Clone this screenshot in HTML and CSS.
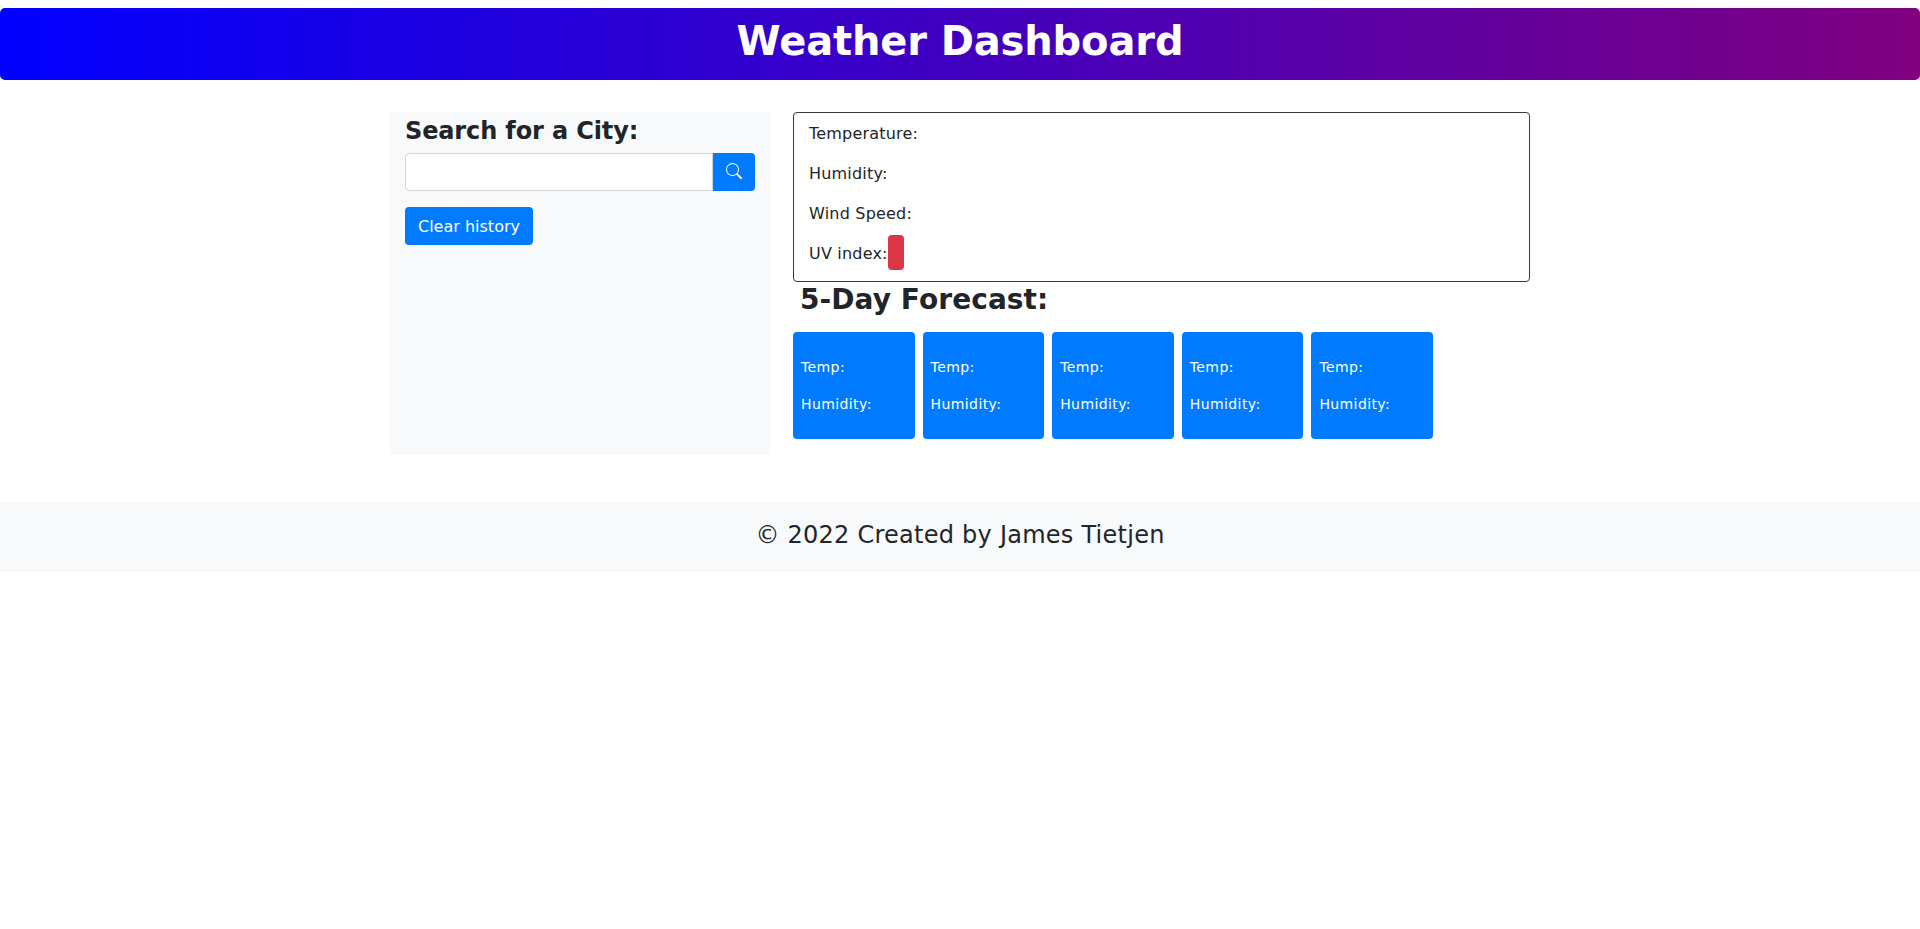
FILE: index.html
```html
<!DOCTYPE html>
<html lang="en">
<head>
  <meta charset="UTF-8" />
  <title>Weather Dashboard</title>
  <link rel="stylesheet" href="styles.css">
</head>
<body>
  <header class="banner">
    <h1>Weather Dashboard</h1>
  </header>
  <main class="container">
    <aside class="sidebar">
      <h2>Search for a City:</h2>
      <div class="search-group">
        <input type="text" class="search-input" />
        <button class="search-btn" aria-label="Search">
          <svg width="16" height="16" viewBox="0 0 16 16" fill="currentColor">
            <path d="M11.742 10.344a6.5 6.5 0 1 0-1.397 1.398h-.001c.03.04.062.078.098.115l3.85 3.85a1 1 0 0 0 1.415-1.414l-3.85-3.85a1.007 1.007 0 0 0-.115-.1zM12 6.5a5.5 5.5 0 1 1-11 0 5.5 5.5 0 0 1 11 0z"/>
          </svg>
        </button>
      </div>
      <button class="clear-btn">Clear history</button>
    </aside>
    <section class="results">
      <div class="current">
        <p>Temperature:</p>
        <p>Humidity:</p>
        <p>Wind Speed:</p>
        <p>UV index:<span class="uv"></span></p>
      </div>
      <h2 class="forecast-title">5-Day Forecast:</h2>
      <div class="forecast">
        <div class="day"><p>Temp:</p><p>Humidity:</p></div>
        <div class="day"><p>Temp:</p><p>Humidity:</p></div>
        <div class="day"><p>Temp:</p><p>Humidity:</p></div>
        <div class="day"><p>Temp:</p><p>Humidity:</p></div>
        <div class="day"><p>Temp:</p><p>Humidity:</p></div>
      </div>
    </section>
  </main>
  <footer class="footer">© 2022 Created by James Tietjen</footer>
</body>
</html>
```

FILE: styles.css
```css
* {
  box-sizing: border-box;
}
body {
  margin: 0;
  padding-top: 8px;
  background: #fff;
  color: #212529;
  font-family: "DejaVu Sans", sans-serif;
  font-size: 16px;
  line-height: 1.5;
}
p {
  margin: 0;
}
.banner {
  height: 72px;
  background: linear-gradient(to right, blue, purple);
  border-radius: 5px;
  color: #fff;
  text-align: center;
}
.banner h1 {
  margin: 0;
  font-size: 40px;
  line-height: 67px;
  font-weight: 700;
  letter-spacing: -0.14px;
}
.container {
  display: flex;
  width: 1140px;
  margin: 32px auto 0;
  padding-bottom: 48px;
}
.sidebar {
  width: 380px;
  height: 343px;
  padding: 0 15px;
  background: #f8f9fa;
}
.sidebar h2 {
  margin: 0 0 3px;
  font-size: 24px;
  line-height: 38px;
  font-weight: 700;
  letter-spacing: -0.13px;
}
.search-group {
  display: flex;
  height: 38px;
  margin-bottom: 16px;
}
.search-input {
  flex: 1;
  min-width: 0;
  border: 1px solid #ced4da;
  border-radius: 4px 0 0 4px;
}
.search-btn {
  width: 42px;
  border: 0;
  border-radius: 0 4px 4px 0;
  background: #007bff;
  color: #fff;
  padding: 0;
}
.clear-btn {
  height: 38px;
  padding: 0 13px;
  border: 0;
  border-radius: 4px;
  background: #007bff;
  color: #fff;
  font-family: inherit;
  font-size: 16px;
}
.results {
  width: 737px;
  margin-left: 23px;
}
.current {
  height: 170px;
  padding: 1px 15px 0;
  border: 1px solid #343a40;
  border-radius: 4px;
}
.current p {
  display: flex;
  height: 40px;
  line-height: 40px;
  letter-spacing: 0.2px;
}
.uv {
  width: 16px;
  height: 35px;
  margin-top: 1px;
  background: #dc3545;
  border-radius: 4px;
}
.forecast-title {
  margin: 0 0 14px;
  padding-left: 7px;
  font-size: 28px;
  line-height: 36px;
  font-weight: 700;
  letter-spacing: 0.08px;
}
.forecast {
  display: flex;
  gap: 8px;
}
.day {
  width: 121.6px;
  height: 107px;
  padding: 17px 8px;
  background: #007bff;
  border-radius: 4px;
  color: #fff;
  font-size: 14px;
}
.day p {
  height: 37px;
  line-height: 37px;
  letter-spacing: 0.4px;
}
.footer {
  height: 69px;
  line-height: 64px;
  background: #f8f9fa;
  text-align: center;
  font-size: 24px;
  letter-spacing: 0.25px;
}
```
